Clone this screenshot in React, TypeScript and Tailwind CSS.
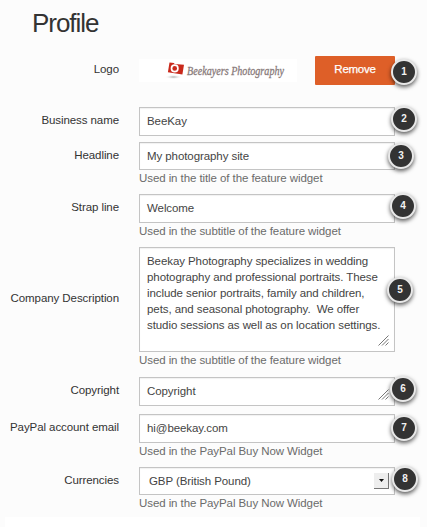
import type { ReactNode } from 'react';

const Badge = ({ n, place }: { n: number; place: string }) => (
  <span
    className={`absolute flex size-[26px] items-center justify-center rounded-full border-2 border-[#e8e8e8] bg-[#333] text-[10px] leading-none font-bold text-[#f2f2f2] shadow-[0_2px_4px_rgba(0,0,0,0.65)] ${place}`}
  >
    {n}
  </span>
);

const Grip = () => (
  <svg className="absolute right-[5px] bottom-[5px] size-[11px]" viewBox="0 0 11 11" stroke="#777" strokeWidth="1">
    <path d="M0.5 10.5L10.5 0.5M4 10.5L10.5 4M7.5 10.5L10.5 7.5" fill="none" />
  </svg>
);

const Logo = () => (
  <svg className="h-[23px] w-[158px] overflow-visible bg-white" viewBox="0 0 158 23">
    <defs>
      <radialGradient id="logoShadow">
        <stop offset="0" stopColor="#aaa" />
        <stop offset="1" stopColor="#fff" stopOpacity="0" />
      </radialGradient>
    </defs>
    <ellipse cx="34.5" cy="18" rx="9" ry="2.2" fill="url(#logoShadow)" />
    <path d="M30.5 3.4l4.5.6.5 1 9.5.8-1.6 9.7L28.9 13.3z" fill="#c9291b" />
    <circle cx="35.7" cy="9.4" r="3.2" fill="#c9291b" stroke="#fff" strokeWidth="1.7" />
    <text
      x="48"
      y="15.5"
      textLength="97"
      lengthAdjust="spacingAndGlyphs"
      fill="#8a7c7c"
      stroke="#8a7c7c"
      strokeWidth="0.3"
      className="font-['Liberation_Serif',serif] text-[12px] tracking-normal italic"
    >
      Beekayers Photography
    </text>
  </svg>
);

type RowProps = {
  label: string;
  n: number;
  badge: string;
  space: string;
  height: string;
  help?: string;
  grip?: boolean;
  children: ReactNode;
};

const Row = ({ label, n, badge, space, height, help, grip, children }: RowProps) => (
  <div className={`flex ${space}`}>
    <div className={`flex w-[119px] shrink-0 items-center justify-end pb-px whitespace-nowrap text-[#333] ${height}`}>
      {label}
    </div>
    <div className="ml-5 w-64">
      <div
        className={`relative flex items-center border border-[#c4c4c4] bg-white pl-[7px] whitespace-pre text-[#444] shadow-[inset_0_1px_1px_rgba(0,0,0,0.06)] ${height}`}
      >
        {children}
        {grip && <Grip />}
        <Badge n={n} place={badge} />
      </div>
      {help && <p className="h-4 leading-4 whitespace-nowrap text-[#6b6b6b]">{help}</p>}
    </div>
  </div>
);

const description = [
  'Beekay Photography specializes in wedding',
  'photography and professional portraits. These',
  'include senior portraits, family and children,',
  'pets, and seasonal photography.  We offer',
  'studio sessions as well as on location settings.',
];

export default function App() {
  return (
    <main className="flex h-[527px] w-[427px] flex-col overflow-hidden bg-[#fcfcfc] font-['Liberation_Sans',Arial,sans-serif] text-[11.5px] tracking-[-0.08px]">
      <h1 className="mt-[7px] ml-8 h-8 text-[26px] leading-8 tracking-[-1.05px] text-[#333]">Profile</h1>

      <div className="mt-[17px] flex h-[29px] items-center">
        <div className="w-[119px] pb-[2px] text-right text-[#333]">Logo</div>
        <div className="ml-5 flex w-64 items-center justify-between">
          <Logo />
          <div className="relative">
            <button className="block h-[29px] w-20 rounded-[1px] bg-[#de5f28] pb-px text-[11.5px] tracking-[-0.25px] text-white [-webkit-text-stroke:0.25px_#fff]">
              Remove
            </button>
            <Badge n={1} place="top-[3px] left-[76px]" />
          </div>
        </div>
      </div>

      <Row label="Business name" n={2} badge="-top-[2px] left-[251px]" space="mt-[22px]" height="h-[29px]">
        BeeKay
      </Row>
      <Row label="Headline" n={3} badge="top-0 left-[248px]" space="mt-[6px]" height="h-[28px]" help="Used in the title of the feature widget">
        <span className="pt-px">My photography site</span>
      </Row>
      <Row label="Strap line" n={4} badge="-top-[2px] left-[250px]" space="mt-[8px]" height="h-[29px]" help="Used in the subtitle of the feature widget">
        <span className="pt-px">Welcome</span>
      </Row>
      <Row
        label="Company Description"
        n={5}
        badge="top-[29px] left-[247px]"
        space="mt-[8px]"
        height="h-[105px]"
        help="Used in the subtitle of the feature widget"
        grip
      >
        <div className="-mt-[13px] leading-4">
          {description.map((line) => (
            <p key={line}>{line}</p>
          ))}
        </div>
      </Row>
      <Row label="Copyright" n={6} badge="-top-[2px] left-[250px]" space="mt-[9px]" height="h-[29px]" grip>
        <span className="pt-px">Copyright</span>
      </Row>
      <Row label="PayPal account email" n={7} badge="top-0 left-[251px]" space="mt-[8px]" height="h-[29px]" help="Used in the PayPal Buy Now Widget">
        hi@beekay.com
      </Row>
      <Row label="Currencies" n={8} badge="-top-[2px] left-[252px]" space="mt-[8px]" height="h-[28px]" help="Used in the PayPal Buy Now Widget">
        <span className="pt-px pl-[2px]">GBP (British Pound)</span>
        <span className="mr-[5px] ml-auto flex h-4 w-[15px] items-center justify-center border-r border-b border-[#777] bg-[#eee]">
          <svg className="h-[3px] w-[5px]" viewBox="0 0 5 3">
            <path d="M0 0h5L2.5 3z" fill="#111" />
          </svg>
        </span>
      </Row>

      <div className="mt-[6px] ml-[5px] h-[10px] w-[415px] bg-white" />
    </main>
  );
}
